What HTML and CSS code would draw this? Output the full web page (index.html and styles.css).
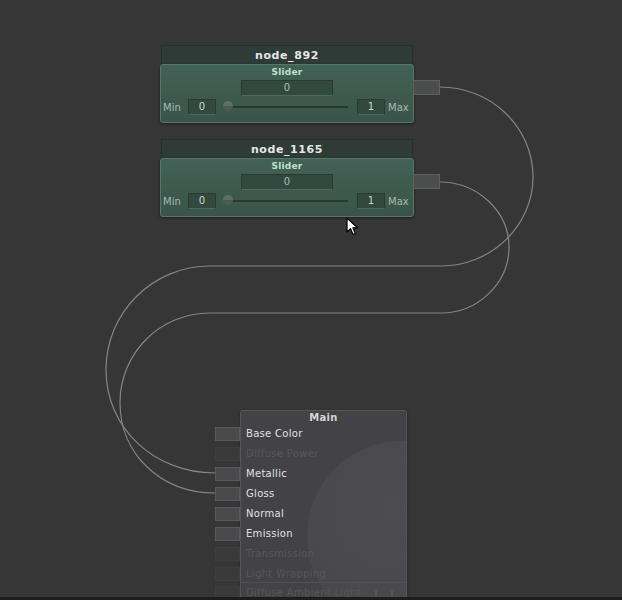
FILE: index.html
```html
<!DOCTYPE html>
<html>
<head>
<meta charset="utf-8">
<link rel="stylesheet" href="styles.css">
</head>
<body>
<div class="canvas">
  <svg class="wires" width="622" height="600" viewBox="0 0 622 600">
    <path d="M440,87 C491,87 533,127 533,177 C533,226 491,266 441,266 L210,266 C153,266 106,312 106,370 C106,427 153,473 215,473" />
    <path d="M440,182 C477,182 509,211 509,247 C509,284 477,313 441,313 L210,313 C160,313 120,353 120,403 C120,453 160,493 215,493" />
  </svg>

  <div class="node node-a">
    <div class="node-title">node_892</div>
    <div class="node-body">
      <div class="node-label">Slider</div>
      <div class="value-box">0</div>
      <div class="slider-row">
        <span class="row-text min-text">Min</span>
        <span class="num-box">0</span>
        <span class="track"><span class="thumb"></span></span>
        <span class="num-box num-max">1</span>
        <span class="row-text">Max</span>
      </div>
      <div class="out-port"></div>
    </div>
  </div>

  <div class="node node-b">
    <div class="node-title">node_1165</div>
    <div class="node-body">
      <div class="node-label">Slider</div>
      <div class="value-box">0</div>
      <div class="slider-row">
        <span class="row-text min-text">Min</span>
        <span class="num-box">0</span>
        <span class="track"><span class="thumb"></span></span>
        <span class="num-box num-max">1</span>
        <span class="row-text">Max</span>
      </div>
      <div class="out-port"></div>
    </div>
  </div>

  <div class="main-node">
    <div class="preview"><div class="sphere"></div></div>
    <div class="main-title">Main</div>
    <div class="in-row"><span class="in-port"></span>Base Color</div>
    <div class="in-row off"><span class="in-port"></span>Diffuse Power</div>
    <div class="in-row"><span class="in-port"></span>Metallic</div>
    <div class="in-row"><span class="in-port"></span>Gloss</div>
    <div class="in-row"><span class="in-port"></span>Normal</div>
    <div class="in-row"><span class="in-port"></span>Emission</div>
    <div class="in-row off"><span class="in-port"></span>Transmission</div>
    <div class="in-row off"><span class="in-port"></span>Light Wrapping</div>
    <div class="in-row off sep"><span class="in-port"></span>Diffuse Ambient Light<span class="mini-icon"></span></div>
  </div>

  <svg class="cursor" width="14" height="20" viewBox="0 0 14 20">
    <path d="M1,1 L1,15 L4.5,11.6 L7,17.5 L9.3,16.5 L6.9,10.8 L11.5,10.8 Z" />
  </svg>
</div>
<div class="bottom-bar"></div>
</body>
</html>
```

FILE: styles.css
```css
html, body {
  margin: 0;
  padding: 0;
}
body {
  width: 622px;
  height: 600px;
  background: #363636;
  font-family: "DejaVu Sans", "Noto Sans", sans-serif;
  display: flex;
  flex-direction: column;
  overflow: hidden;
}
.canvas {
  position: relative;
  flex: 1;
  overflow: hidden;
}
.bottom-bar {
  height: 3px;
  background: #1d1d1d;
}
.wires {
  position: absolute;
  left: 0;
  top: 0;
}
.wires path {
  fill: none;
  stroke: #858585;
  stroke-width: 1.2;
}

/* slider nodes */
.node {
  position: absolute;
  left: 161px;
  width: 252px;
}
.node-a { top: 45px; }
.node-b { top: 139px; }
.node-title {
  height: 18px;
  background: #2e3b36;
  border: 1px solid #25302c;
  border-bottom: none;
  color: #e6e6e6;
  font-size: 11px;
  font-weight: bold;
  letter-spacing: 0.6px;
  text-align: center;
  line-height: 19px;
}
.node-body {
  position: relative;
  margin-left: -1px;
  width: 252px;
  height: 56px;
  background: linear-gradient(#436156, #3d594e 60%, #3a5449);
  border: 1px solid #56776a;
  border-radius: 3px;
  box-shadow: 0 1px 3px rgba(0, 0, 0, 0.45);
  padding-top: 1px;
}
.node-label {
  height: 12px;
  line-height: 12px;
  text-align: center;
  color: #bfe0d0;
  font-size: 9px;
  font-weight: bold;
  letter-spacing: 0.2px;
}
.value-box {
  margin: 2px auto 0;
  width: 90px;
  height: 14px;
  background: #33483f;
  border: 1px solid #2a3a33;
  border-bottom-color: #4a6a5d;
  color: #a9bdb4;
  font-size: 10px;
  line-height: 14px;
  text-align: center;
}
.slider-row {
  display: flex;
  align-items: center;
  margin-top: 3px;
  height: 16px;
  padding: 0 0 0 2px;
}
.row-text {
  color: #a6bbb2;
  font-size: 10px;
  white-space: nowrap;
}
.min-text {
  width: 25px;
}
.num-box {
  flex: none;
  width: 26px;
  height: 14px;
  background: #33483f;
  border: 1px solid #2a3a33;
  border-bottom-color: #4a6a5d;
  color: #c8d8d0;
  font-size: 10px;
  line-height: 14px;
  text-align: center;
}
.num-max {
  margin-right: 3px;
}
.track {
  position: relative;
  flex: none;
  width: 124px;
  height: 2px;
  margin: 0 9px 0 8px;
  background: #2a3832;
}
.thumb {
  position: absolute;
  left: -1px;
  top: -5px;
  width: 10px;
  height: 10px;
  border-radius: 50%;
  background: linear-gradient(#5e6d67 50%, #4a5d55 50%);
}
.out-port {
  position: absolute;
  left: 252px;
  top: 15px;
  width: 25px;
  height: 13px;
  background: #4b4e4c;
  border: 1px solid #5d605e;
}

/* main node */
.main-node {
  position: absolute;
  left: 240px;
  top: 410px;
  width: 165px;
  height: 200px;
  background: #434347;
  border: 1px solid #56565a;
  border-radius: 3px;
  box-shadow: 0 1px 3px rgba(0, 0, 0, 0.35);
}
.preview {
  position: absolute;
  inset: 0;
  overflow: hidden;
  border-radius: 3px;
}
.sphere {
  position: absolute;
  left: 66px;
  top: 30px;
  width: 190px;
  height: 190px;
  border-radius: 50%;
  background: radial-gradient(circle at 45% 35%, #4d4d51, #49494d 60%, #454549);
}
.main-title {
  position: relative;
  height: 13px;
  line-height: 13px;
  text-align: center;
  color: #d4d4d6;
  font-size: 10px;
  font-weight: bold;
  letter-spacing: 0.3px;
}
.in-row {
  position: relative;
  height: 20px;
  line-height: 20px;
  padding-left: 5px;
  color: #e0e0e0;
  font-size: 10px;
  letter-spacing: 0.3px;
  white-space: nowrap;
}
.in-port {
  position: absolute;
  left: -26px;
  top: 3px;
  width: 23px;
  height: 12px;
  background: #4a4a4c;
  border: 1px solid #5a5a5c;
}
.in-row.off {
  color: #56565a;
}
.in-row.off .in-port {
  background: #3a3a3b;
  border-color: #3e3e3f;
}
.in-row.sep {
  border-top: 1px solid #515155;
  margin-top: -2px;
  line-height: 20px;
}
.mini-icon {
  position: absolute;
  left: 134px;
  top: 7px;
  width: 14px;
  height: 9px;
  border-left: 2px solid #55555a;
  border-right: 2px solid #55555a;
}
.cursor {
  position: absolute;
  left: 346px;
  top: 217px;
}
.cursor path {
  fill: #ffffff;
  stroke: #000000;
  stroke-width: 1.2;
  stroke-linejoin: round;
}
```
